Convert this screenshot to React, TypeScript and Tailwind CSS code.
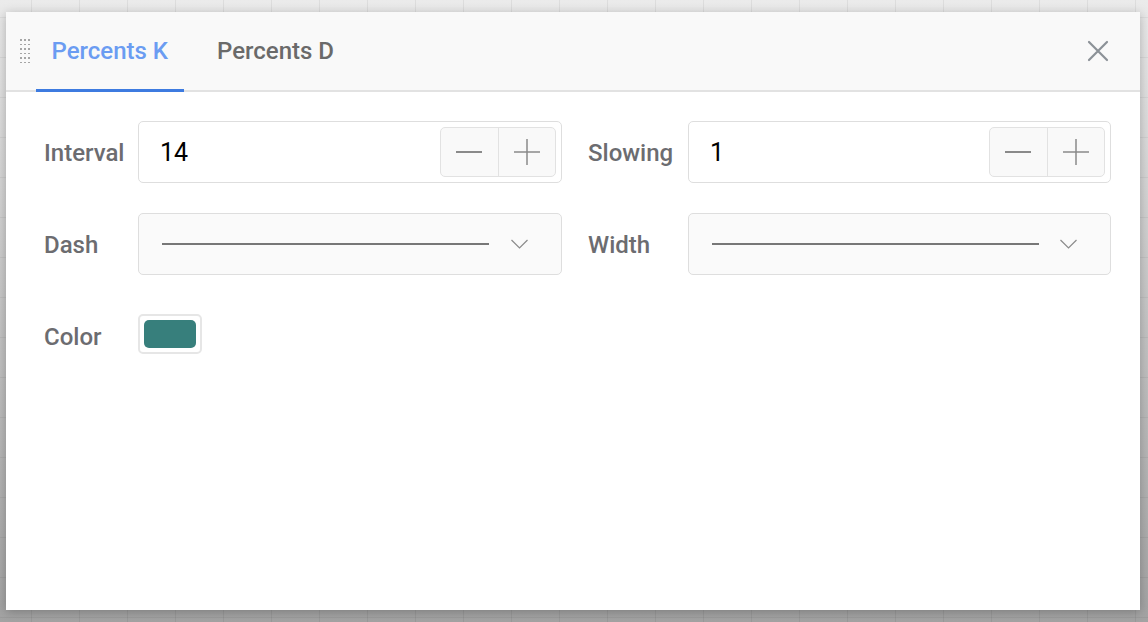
import React from "react";

const Stepper: React.FC = () => (
  <div className="flex h-[50px] w-[116px] rounded-[5px] border border-[#e2e2e2] bg-[#f9f9f9]">
    <button type="button" className="flex flex-1 items-center justify-center">
      <span className="block h-[1.5px] w-[26px] bg-[#8a8a8a]" />
    </button>
    <div className="w-px bg-[#e2e2e2]" />
    <button type="button" className="flex flex-1 items-center justify-center">
      <svg width="26" height="26" viewBox="0 0 26 26" fill="none" stroke="#8a8a8a" strokeWidth="1.5">
        <path d="M0 13h26M13 0v26" />
      </svg>
    </button>
  </div>
);

const NumberField: React.FC<{ value: string }> = ({ value }) => (
  <div className="flex h-[62px] flex-1 items-center justify-between rounded-[5px] border border-[#dedede] bg-white pl-[21px] pr-[5px]">
    <span className="pt-[1px] text-[25px] text-black">{value}</span>
    <Stepper />
  </div>
);

const LineSelect: React.FC = () => (
  <div className="flex h-[62px] flex-1 items-center rounded-[5px] border border-[#dedede] bg-[#fafafa] pl-[23px] pr-[33px]">
    <span className="block h-[2px] w-[327px] bg-[#777]" />
    <svg className="ml-auto" width="17" height="10" viewBox="0 0 17 10" fill="none" stroke="#8a8a8a" strokeWidth="1.2">
      <path d="M0.5 1l8 8 8-8" />
    </svg>
  </div>
);

const Label: React.FC<{ text: string; w: string }> = ({ text, w }) => (
  <span className={`${w} shrink-0 pt-[2px] text-[24px] font-medium text-[#6c6c70]`}>{text}</span>
);

const DragHandle: React.FC = () => (
  <div className="grid grid-cols-3 gap-x-[2.5px] gap-y-[3px]">
    {Array.from({ length: 18 }).map((_, i) => (
      <span key={i} className="block h-[1.5px] w-[1.5px] bg-[#a6a6a6]" />
    ))}
  </div>
);

export default function App() {
  return (
    <div
      className="h-[622px] w-[1148px] overflow-hidden bg-[linear-gradient(to_right,rgba(0,0,0,0.06)_1px,transparent_1px),linear-gradient(to_bottom,rgba(0,0,0,0.05)_1px,transparent_1px),linear-gradient(to_bottom,#ebebeb,#c6c6c6_50%,#a3a3a3)] bg-[size:48px_40px,48px_40px,100%_100%] bg-[position:31px_0,0_17px,0_0] pl-[6px] pt-[12px]"
      style={{ fontFamily: "Roboto, 'Open Sans', sans-serif" }}
    >
      <div className="flex h-[598px] w-[1134px] flex-col bg-white shadow-[0_2px_10px_rgba(0,0,0,0.25)]">
        <div className="flex h-[80px] items-stretch border-b-2 border-[#e2e2e2] bg-[#f9f9f9] pl-[14px] pr-[31px]">
          <div className="flex items-center pr-[6px]">
            <DragHandle />
          </div>
          <div className="flex gap-[17px]">
            <button
              type="button"
              className="-mb-[2px] flex items-center border-b-[3px] border-[#3d7be0] px-[16px] text-[24px] font-medium text-[#6b9cf2]"
            >
              Percents K
            </button>
            <button
              type="button"
              className="-mb-[2px] flex items-center border-b-[3px] border-transparent px-[16px] text-[24px] font-medium text-[#6a6a6a]"
            >
              Percents D
            </button>
          </div>
          <button type="button" className="ml-auto flex items-center">
            <svg width="22" height="22" viewBox="0 0 22 22" fill="none" stroke="#8b9197" strokeWidth="2.2" strokeLinecap="round">
              <path d="M2 2l18 18M20 2L2 20" />
            </svg>
          </button>
        </div>

        <div className="flex flex-col gap-[30px] pl-[38px] pr-[29px] pt-[29px]">
          <div className="flex gap-[26px]">
            <div className="flex w-[518px] items-center">
              <Label text="Interval" w="w-[94px]" />
              <NumberField value="14" />
            </div>
            <div className="flex flex-1 items-center">
              <Label text="Slowing" w="w-[100px]" />
              <NumberField value="1" />
            </div>
          </div>
          <div className="flex gap-[26px]">
            <div className="flex w-[518px] items-center">
              <Label text="Dash" w="w-[94px]" />
              <LineSelect />
            </div>
            <div className="flex flex-1 items-center">
              <Label text="Width" w="w-[100px]" />
              <LineSelect />
            </div>
          </div>
          <div className="flex h-[62px] items-center">
            <Label text="Color" w="w-[94px]" />
            <div className="-mt-[4px] rounded-[5px] border-2 border-[#e6e6e6] bg-white p-[4px]">
              <div className="h-[28px] w-[52px] rounded-[5px] bg-[#377f7c]" />
            </div>
          </div>
        </div>
      </div>
    </div>
  );
}
